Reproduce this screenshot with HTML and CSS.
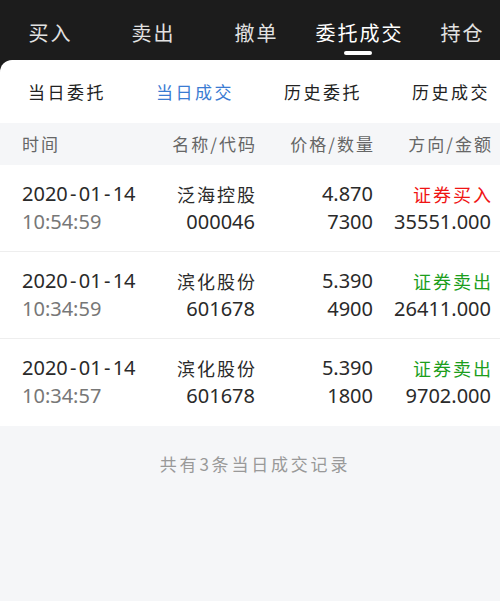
FILE: index.html
```html
<!DOCTYPE html>
<html lang="zh-CN">
<head>
<meta charset="utf-8">
<link rel="stylesheet" href="styles.css">
</head>
<body>
<div class="sheet">
  <nav class="topbar">
    <div class="ttab">买入</div>
    <div class="ttab">卖出</div>
    <div class="ttab">撤单</div>
    <div class="ttab active">委托成交</div>
    <div class="ttab">持仓</div>
  </nav>
  <div class="card">
    <div class="subtabs">
      <div class="stab">当日委托</div>
      <div class="stab active">当日成交</div>
      <div class="stab">历史委托</div>
      <div class="stab">历史成交</div>
    </div>
    <div class="thead">
      <div class="c1">时间</div>
      <div class="c2"><span class="hl">名称/代码</span></div>
      <div class="c3"><span class="hl">价格/数量</span></div>
      <div class="c4"><span class="hl">方向/金额</span></div>
    </div>
    <div class="row">
      <div class="c1"><div class="date">2020<span class="dash">-</span>01<span class="dash">-</span>14</div><div class="time">10:54:59</div></div>
      <div class="c2"><div class="name">泛海控股</div><div class="num">000046</div></div>
      <div class="c3"><div class="num">4.870</div><div class="num">7300</div></div>
      <div class="c4"><div class="dir buy">证券买入</div><div class="num">35551.000</div></div>
    </div>
    <div class="row">
      <div class="c1"><div class="date">2020<span class="dash">-</span>01<span class="dash">-</span>14</div><div class="time">10:34:59</div></div>
      <div class="c2"><div class="name">滨化股份</div><div class="num">601678</div></div>
      <div class="c3"><div class="num">5.390</div><div class="num">4900</div></div>
      <div class="c4"><div class="dir sell">证券卖出</div><div class="num">26411.000</div></div>
    </div>
    <div class="row last">
      <div class="c1"><div class="date">2020<span class="dash">-</span>01<span class="dash">-</span>14</div><div class="time">10:34:57</div></div>
      <div class="c2"><div class="name">滨化股份</div><div class="num">601678</div></div>
      <div class="c3"><div class="num">5.390</div><div class="num">1800</div></div>
      <div class="c4"><div class="dir sell">证券卖出</div><div class="num">9702.000</div></div>
    </div>
  </div>
</div>
<div class="footer">共有3条当日成交记录</div>
</body>
</html>
```

FILE: styles.css
```css
html, body {
  margin: 0;
  padding: 0;
}
body {
  width: 500px;
  height: 601px;
  overflow: hidden;
  background: #f5f6f8;
  font-family: "Noto Sans CJK SC", "Noto Sans", sans-serif;
}
.sheet {
  background: #1c1c1c;
}
.topbar {
  height: 60px;
  display: flex;
  margin-left: -1px;
}
.ttab {
  flex: 0 0 103px;
  text-align: center;
  color: #e2e2e2;
  font-size: 20px;
  letter-spacing: 2px;
  line-height: 66px;
  position: relative;
}
.ttab.active {
  color: #ffffff;
}
.ttab.active::after {
  content: "";
  position: absolute;
  left: 50%;
  bottom: 5px;
  width: 28px;
  height: 4px;
  margin-left: -16px;
  border-radius: 2px;
  background: #ffffff;
}
.card {
  background: #ffffff;
  border-top-left-radius: 12px;
}
.subtabs {
  height: 63px;
  display: flex;
  padding-left: 3px;
}
.stab {
  flex: 0 0 128px;
  text-align: center;
  font-size: 17px;
  letter-spacing: 2.5px;
  line-height: 63px;
  color: #222;
}
.stab.active {
  color: #3a7bd2;
}
.thead, .row {
  display: grid;
  grid-template-columns: 120px 113px 118px 118px;
  padding: 0 9px 0 22px;
}
.thead {
  height: 42px;
  line-height: 42px;
  background: #f5f6f8;
  color: #666;
  font-size: 17px;
  letter-spacing: 2px;
}
.hl {
  margin-right: -2px;
}
.c2, .c3, .c4 {
  text-align: right;
}
.row {
  box-sizing: content-box;
  height: 56px;
  padding-top: 15px;
  padding-bottom: 15px;
  border-bottom: 1px solid #eeeeee;
  line-height: 28px;
  font-size: 20px;
  color: #2a2a2a;
}
.row.last {
  border-bottom: none;
  padding-bottom: 16px;
}
.date, .time, .num {
  font-family: "Noto Sans", sans-serif;
  font-size: 20px;
}
.dash {
  display: inline-block;
  width: 11px;
  text-align: center;
}
.time {
  color: #777;
}
.name, .dir {
  font-size: 18px;
  letter-spacing: 2px;
  margin-right: -2px;
}
.buy {
  color: #f01414;
}
.sell {
  color: #1c9e1c;
}
.footer {
  text-align: center;
  padding-top: 26px;
  padding-left: 10px;
  font-size: 17px;
  letter-spacing: 2.8px;
  color: #999;
  line-height: 24px;
}
```
